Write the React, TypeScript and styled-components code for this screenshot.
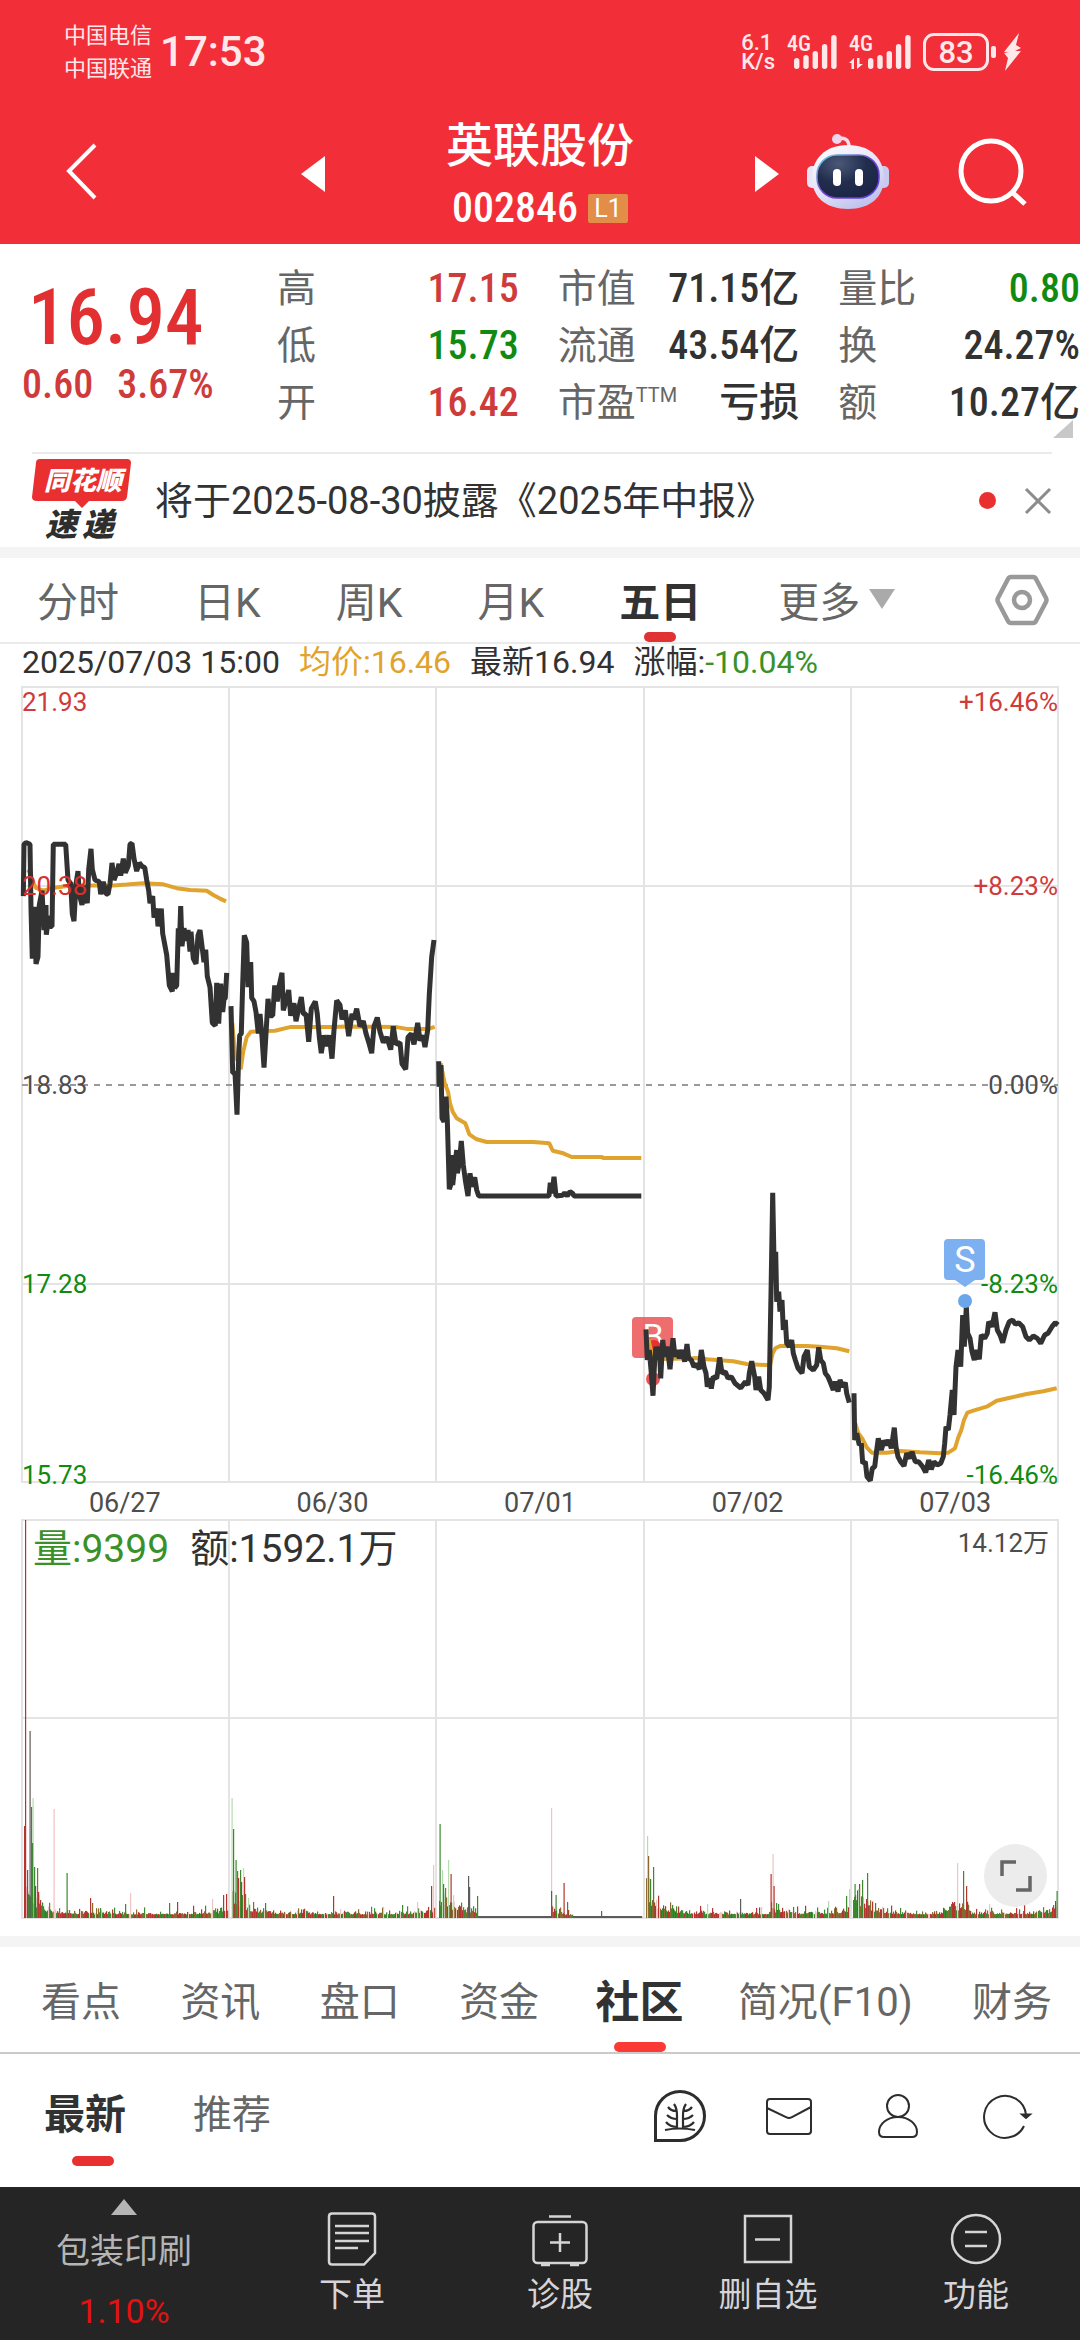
import React from "react";
import styled, { createGlobalStyle, css } from "styled-components";

const sans = `Roboto, "Noto Sans CJK SC", sans-serif`;
const figures = `"Roboto Condensed", Roboto, "Noto Sans CJK SC", sans-serif`;

const color = {
  brand: "#f22f38",
  up: "#e23032",
  upSoft: "#cf3b3b",
  down: "#118a11",
  downSoft: "#3a9128",
  ink: "#323232",
  grey: "#666666",
  axis: "#4d4d4d",
  line: "#ebebeb",
  band: "#f4f4f4",
  average: "#e0a32e",
  dock: "#252525",
  dockText: "#d6d4d6",
};

const GlobalStyle = createGlobalStyle`
  *, *::before, *::after { box-sizing: border-box; }
  body {
    margin: 0;
    background: #ffffff;
    color: ${color.ink};
    font-family: ${sans};
  }
  button {
    margin: 0;
    padding: 0;
    border: 0;
    background: none;
    color: inherit;
    font: inherit;
    cursor: pointer;
  }
  svg { display: block; overflow: visible; }
`;

const Page = styled.div`
  display: flex;
  flex-direction: column;
  min-height: 100vh;
`;

/* ---------- header ---------- */

const Header = styled.header`
  background: ${color.brand};
  color: #ffffff;
`;

const StatusBar = styled.div`
  display: flex;
  align-items: center;
  height: 104px;
  padding: 0 59px 0 64px;
  color: #ffe8ea;
`;

const Carriers = styled.div`
  font-size: 22px;
  line-height: 33px;
`;

const Clock = styled.time`
  margin-left: 8px;
  font-size: 42px;
  line-height: 48px;
  font-weight: 500;
`;

const StatusIcons = styled.div`
  display: flex;
  align-items: center;
  gap: 12px;
  margin-left: auto;
`;

const NetSpeed = styled.div`
  font-size: 22px;
  line-height: 19px;
  font-weight: 500;
`;

const Battery = styled.div`
  display: flex;
  align-items: center;
  gap: 2px;

  span {
    width: 66px;
    height: 38px;
    border: 3px solid currentColor;
    border-radius: 11px;
    font-size: 31px;
    line-height: 33px;
    font-weight: 500;
    text-align: center;
  }

  i {
    width: 5px;
    height: 12px;
    border-radius: 2px;
    background: currentColor;
  }

  svg { margin-left: 5px; }
`;

const NavBar = styled.nav`
  display: grid;
  grid-template-columns: 1fr 478px 1fr;
  align-items: center;
  height: 140px;
`;

const NavStart = styled.div`
  padding-left: 64px;
`;

const NavEnd = styled.div`
  display: flex;
  align-items: center;
  justify-content: flex-end;
  gap: 69px;
  padding-right: 54px;
`;

const StockSwitcher = styled.div`
  display: flex;
  align-items: center;
  justify-content: space-between;
`;

const StockTitle = styled.div`
  text-align: center;
  padding-top: 6px;

  h1 {
    margin: 0;
    font-size: 47px;
    line-height: 62px;
    font-weight: 500;
  }

  p {
    display: flex;
    align-items: center;
    justify-content: center;
    gap: 10px;
    margin: 0;
    font-family: ${figures};
    font-size: 42px;
    line-height: 62px;
    font-weight: 500;
  }
`;

const LevelBadge = styled.span`
  width: 40px;
  height: 29px;
  border-radius: 2px;
  background: #e28d48;
  font-family: ${sans};
  font-size: 25px;
  line-height: 30px;
  font-weight: 400;
`;

/* ---------- quote ---------- */

const Quote = styled.section`
  position: relative;
  display: grid;
  grid-template-columns: 240px 1fr;
  column-gap: 37px;
  padding-top: 16px;
  height: 208px;
`;

const Price = styled.div`
  padding: 14px 0 0 22px;
  font-family: ${figures};
  color: ${color.up};
  white-space: nowrap;

  strong {
    display: block;
    padding-left: 6px;
    font-size: 77px;
    line-height: 88px;
    font-weight: 500;
  }

  p {
    display: flex;
    gap: 24px;
    margin: 0;
    color: ${color.upSoft};
    font-size: 40px;
    line-height: 46px;
    font-weight: 500;
  }
`;

const Stats = styled.dl`
  display: grid;
  grid-template-columns: repeat(3, 1fr);
  grid-auto-rows: 57px;
  column-gap: 39px;
  margin: 0;
`;

const Stat = styled.div`
  display: flex;
  justify-content: space-between;
  align-items: baseline;
  line-height: 57px;
  white-space: nowrap;

  dt {
    color: ${color.grey};
    font-size: 39px;
  }

  dt sup {
    font-size: 20px;
    line-height: 20px;
    vertical-align: 14px;
  }
`;

const tones = { up: color.upSoft, down: color.down, plain: color.ink };

const StatValue = styled.dd<{ $tone: keyof typeof tones }>`
  margin: 0;
  color: ${(p) => tones[p.$tone]};
  font-family: ${figures};
  font-size: 40px;
  font-weight: 500;

  span {
    font-family: ${sans};
  }
`;

const MoreCorner = styled.button`
  position: absolute;
  right: 7px;
  bottom: 14px;
  width: 20px;
  height: 18px;
  background: #c8c8c8;
  clip-path: polygon(100% 0, 100% 100%, 0 100%);
`;

const Notice = styled.section`
  display: flex;
  align-items: center;
  height: 95px;
  margin: 0 28px 0 32px;
  border-top: 2px solid ${color.line};

  svg { flex: none; }

  p {
    flex: 1;
    margin: 0 0 0 23px;
    font-size: 38px;
    line-height: 48px;
    white-space: nowrap;
  }
`;

const UnreadDot = styled.i`
  width: 17px;
  height: 17px;
  margin-right: 28px;
  border-radius: 50%;
  background: #e83030;
`;

const Band = styled.div`
  flex: none;
  height: 11px;
  background: ${color.band};
`;

/* ---------- period tabs ---------- */

const PeriodTabs = styled.div`
  display: flex;
  align-items: stretch;
  height: 86px;
  padding: 0 31px 0 37px;
  border-bottom: 2px solid ${color.line};
`;

const TabButton = styled.button<{ $active?: boolean; $bar: number; $barColor: string }>`
  position: relative;
  padding-bottom: 2px;
  white-space: nowrap;
  color: ${(p) => (p.$active ? color.ink : color.grey)};
  font-weight: ${(p) => (p.$active ? 700 : 400)};

  ${(p) =>
    p.$active &&
    css`
      &::after {
        content: "";
        position: absolute;
        bottom: 0;
        left: 50%;
        width: ${p.$bar}px;
        height: 10px;
        border-radius: 5px;
        background: ${p.$barColor};
        transform: translateX(-50%);
      }
    `}
`;

const PeriodTab = styled(TabButton)`
  font-size: 41px;
  margin-right: 75px;
`;

const MorePeriods = styled(PeriodTab)`
  display: flex;
  align-items: center;
  gap: 9px;
  margin: 0 auto 0 2px;
`;

/* ---------- charts ---------- */

const Readout = styled.div`
  display: flex;
  gap: 19px;
  padding: 0 22px;
  height: 42px;
  font-size: 32px;
  line-height: 36px;
  white-space: nowrap;
`;

const Tint = styled.span<{ $c: string }>`
  color: ${(p) => p.$c};
`;

const Charts = styled.section`
  margin: 0 21px;
  padding-bottom: 17px;

  svg {
    width: 100%;
    height: auto;
    font-family: ${sans};
  }
`;

const Dates = styled.div`
  display: grid;
  grid-template-columns: repeat(5, 1fr);
  padding-top: 4px;
  color: ${color.axis};
  font-size: 27px;
  line-height: 32px;
  text-align: center;
`;

const VolumePanel = styled.div`
  position: relative;
`;

const VolumeLegend = styled.div`
  position: absolute;
  top: 6px;
  left: 12px;
  right: 10px;
  display: flex;
  gap: 21px;
  font-size: 39px;
  line-height: 48px;

  small {
    margin-left: auto;
    color: ${color.axis};
    font-size: 26px;
    line-height: 36px;
  }
`;

const ExpandButton = styled.button`
  position: absolute;
  right: 12px;
  bottom: 12px;
  display: grid;
  place-items: center;
  width: 63px;
  height: 63px;
  border-radius: 50%;
  background: #ececec;

  svg { width: 32px; height: 32px; }
`;

/* ---------- community ---------- */

const SectionTabs = styled.div`
  display: flex;
  justify-content: space-between;
  height: 107px;
  padding: 0 28px 0 41px;
  border-bottom: 2px solid #c8cacc;
`;

const SectionTab = styled(TabButton)`
  margin: ${(p) => (p.$active ? "0 -5px 0 -3px" : "0")};
  font-size: ${(p) => (p.$active ? 44 : 40)}px;
`;

const Feed = styled.div`
  display: flex;
  height: 133px;
  padding: 0 19px 0 44px;
`;

const FeedTab = styled(TabButton)`
  height: 112px;
  margin-right: 51px;
  padding: 2px 16px 0 0;
  font-size: ${(p) => (p.$active ? 41 : 39)}px;
`;

const FeedTools = styled.div`
  display: flex;
  align-items: center;
  margin-left: auto;
  padding-bottom: 9px;

  button {
    display: grid;
    justify-items: center;
    width: 109px;
  }
`;

/* ---------- dock ---------- */

const Dock = styled.footer`
  display: grid;
  grid-template-columns: 248fr repeat(4, 208fr);
  flex: 1;
  min-height: 153px;
  background: ${color.dock};
  color: ${color.dockText};
  font-size: 33px;
`;

const DockButton = styled.button`
  display: flex;
  flex-direction: column;
  align-items: center;
  padding-top: 23px;
  line-height: 50px;
`;

const Industry = styled.button`
  display: flex;
  flex-direction: column;
  align-items: center;
  padding-top: 12px;
  color: #b5b5b5;
  font-size: 34px;
  line-height: 60px;

  svg { margin-bottom: 6px; }

  span + span {
    color: #e01212;
  }
`;

/* ---------- data ---------- */

type Point = [number, number];
type Session = { x: number; y: number; kx: number; ky: number; price: string; average: string };

const sessions: Session[] = [
  {
    x: -22, y: -7, kx: 3, ky: 2.8,
    price:
      "70,605 72,460 78,455 90,460 93,640 97,780 103,635 108,795 114,775 118,630 126,590 132,700 138,630 139,713 146,660 150,690 156,690 160,460 197,460 204,560 212,570 217,655 222,675 228,570 234,535 238,600 246,630 252,575 262,625 266,530 273,473 277,530 285,560 298,565 302,600 310,565 318,598 324,600 330,570 336,512 342,560 350,540 357,515 362,548 370,500 376,540 385,520 390,460 396,457 402,500 410,535 418,512 426,522 434,525 440,560 446,590 450,625 458,605 462,665 470,640 474,690 484,640 488,710 494,740 500,770 508,855 517,872 518,820 524,862 530,855 535,695 538,745 542,633 546,745 552,695 560,730 564,700 570,760 573,705 580,780 588,795 594,715 600,700 606,745 612,790 617,755 622,830 630,860 637,960 646,968 650,848 656,962 662,850 668,930 672,895 676,890 680,820",
    average:
      "84,540 90,530 97,562 108,582 130,590 160,582 200,577 260,575 340,575 380,573 430,569 490,572 530,583 570,588 620,590 640,602 660,612 678,620",
  },
  {
    x: -22, y: -7, kx: 3, ky: 2.8,
    price:
      "693,913 698,1100 705,1100 711,1217 716,1050 719,995 724,990 728,850 733,715 740,735 744,860 752,790 755,890 762,900 768,930 775,990 780,935 786,1000 792,1085 798,990 804,893 810,940 818,940 824,855 832,900 838,855 846,820 850,925 858,900 866,868 872,940 882,905 888,955 896,920 904,888 910,935 918,935 926,1013 934,920 946,900 952,935 958,1000 964,1045 972,995 980,1025 988,995 996,1060 1002,980 1010,897 1020,910 1026,950 1036,925 1046,997 1056,935 1062,950 1070,920 1080,970 1090,955 1098,990 1108,1020 1115,1045 1122,970 1132,945 1140,985 1150,1015 1160,1000 1172,1035 1180,970 1188,1020 1200,1015 1206,1075 1217,1090 1224,1000 1234,990 1242,1020 1253,960 1260,1010 1268,995 1275,1028 1283,980 1288,880 1295,775 1302,728",
    average:
      "697,960 705,1050 715,1070 722,1090 730,1040 740,1000 752,985 790,983 825,982 870,972 1000,972 1040,970 1190,972 1220,977 1285,977 1304,971",
  },
  {
    x: 398, y: 213, kx: 3, ky: 3,
    price:
      "56,484 57,560 63,495 66,655 72,665 78,590 82,660 88,868 94,850 96,765 98,855 104,800 110,750 112,820 118,790 124,723 130,795 136,840 144,888 150,820 156,860 164,832 170,870 176,888 387,888 391,848 396,880 402,830 408,888 428,886 434,878 442,888 450,875 458,880 462,888 664,888",
    average:
      "62,490 68,520 74,550 84,575 90,610 98,635 110,655 136,670 148,703 170,718 200,726 340,726 388,730 398,752 430,760 455,771 545,771 550,774 664,774",
  },
  {
    x: 598, y: 473, kx: 3, ky: 3,
    price:
      "78,508 82,600 88,570 94,640 99,707 104,600 108,560 112,600 118,560 122,655 128,540 134,590 142,560 150,628 159,535 165,590 172,570 178,595 186,570 194,605 201,552 206,595 214,600 222,620 230,612 238,628 244,570 252,620 258,640 262,680 270,655 274,686 280,650 290,655 299,592 306,640 316,635 324,655 334,650 345,670 362,684 376,665 384,675 388,640 395,604 404,650 408,690 416,650 422,690 432,700 444,720 448,680 453,400 458,98 462,300 467,275 470,425 476,395 480,455 486,420 490,510 496,480 500,550 508,560 515,540 520,580 526,600 534,625 546,640 552,590 562,570 568,620 580,630 590,615 596,562 602,600 610,610 616,640 624,650 632,670 640,690 646,665 654,695 660,660 668,680 676,668 680,700 688,728",
    average:
      "86,540 92,570 102,590 120,597 160,596 240,594 262,598 340,604 380,612 450,616 458,580 466,565 480,558 560,558 600,560 650,565 688,574",
  },
  {
    x: 598, y: 473, kx: 3, ky: 3,
    price:
      "702,700 704,840 710,820 718,855 724,850 728,910 736,905 741,950 751,962 757,925 764,920 770,870 775,835 784,870 792,842 800,855 806,840 814,865 823,803 828,860 834,890 842,905 852,918 860,880 870,895 876,875 886,905 896,905 908,920 917,937 926,900 934,928 942,905 952,915 962,910 970,890 974,850 978,800 985,810 990,765 997,690 1002,765 1008,620 1014,570 1022,620 1028,465 1033,560 1039,440 1043,520 1050,535 1056,575 1063,600 1070,570 1078,598 1084,525 1094,535 1102,520 1106,485 1116,500 1125,457 1132,510 1140,525 1148,548 1158,510 1168,485 1178,480 1186,493 1196,488 1208,500 1218,530 1228,540 1240,528 1252,535 1262,550 1274,525 1284,520 1296,500 1306,488 1314,495",
    average:
      "706,790 715,820 728,838 740,862 755,878 800,878 840,873 900,877 960,880 985,878 1005,865 1014,835 1024,810 1032,780 1042,758 1060,752 1100,740 1130,722 1170,713 1220,702 1270,694 1310,685",
  },
];

const plot = (s: Session, source: string) =>
  source
    .split(" ")
    .map((pair) => pair.split(",").map(Number) as Point)
    .map(([px, py]) => `${(s.x + px / s.kx).toFixed(1)},${(s.y + py / s.ky).toFixed(1)}`)
    .join(" ");

const barColors = {
  r: "#b5342f", R: "#f0c4c2", g: "#3c8a30", G: "#b4dcb0", k: "#5c5c5c", n: "#8a6a2e",
};
type Bar = { x: number; h: number; c: keyof typeof barColors };

/* tallest one-minute bars: x, height, colour */
const peaks: Bar[] = (
  "2,92,r 3,398,r 5,48,k 7.5,187,k 9,111,g 10.5,120,G 10,75,g 12,51,g 13,32,r 15,50,n 16,26,r 18,18,r 31.5,109,R 44.5,45,g 68,20,r 70,15,n 78,10,g 103,14,g 108,25,R 147,15,g 155,16,r 190,19,R 201,23,r 204,24,r " +
  "209.5,120,G 211,89,g 213.5,58,g 215,47,n 216,40,r 218,48,g 219,36,r 221,50,R 222,41,r 223,24,g 226,20,G 243,15,g 311,22,r 380,13,g 395,16,R 409,32,r 411,53,R " +
  "417.5,94,g 420,48,G 421,34,g 423,30,n 426,58,G 428.5,44,r 431,23,R 446,42,k 447,31,k 455,22,g " +
  "529,110,R 529,27,k 533.5,23,g 541.5,35,r 545,16,g 579,7,k " +
  "625,82,G 626,62,n 628,39,g 631,51,g 685,14,G 718,19,k 748.5,44,r 750.5,64,R 751.5,32,r 754,15,g 806,17,G 824,22,g 827,29,G " +
  "832.5,34,g 836,29,G 840,38,g 845,45,g 930,16,r 935,55,R 941,47,g 944,32,r 967,14,R 1002,14,r 1033,17,r 1034.5,27,g"
)
  .split(" ")
  .map((item) => {
    const [x, h, c] = item.split(",");
    return { x: Number(x), h: Number(h), c: c as Bar["c"] };
  });

const envelope = (x: number) => {
  const session = Math.min(4, Math.floor(x / 207.2));
  const t = x - session * 207.2;
  if (session === 2) {
    if (t < 40) return 34 * Math.exp(-t / 20) + 6;
    if (t > 114 && t < 136) return 16 * Math.exp(-(t - 114) / 10) + 1;
    return 1;
  }
  const opening = 58 * Math.exp(-t / 14);
  const closing = 12 * Math.exp(-(207 - t) / 12);
  const surge = session === 4 && t > 92 && t < 120 ? 14 : 0;
  const spike = session === 3 && t > 126 && t < 150 ? 8 : 0;
  return opening + closing + surge + spike + 6;
};

const minuteBars: Bar[] = (() => {
  const out: Bar[] = [];
  let seed = 20250703;
  const next = () => {
    seed = (seed * 1103515245 + 12345) % 2147483648;
    return seed / 2147483648;
  };
  for (let x = 2; x < 1036; x += 1) {
    const top = envelope(x);
    const gap = x % 207.2 > 205 || x % 207.2 < 2;
    const roll = next();
    const h = top === 1 ? 2 : 2 + top * (0.25 + 0.75 * next() * next()) + (next() > 0.93 ? 5 : 0);
    const c = top === 1 ? "k" : roll < 0.34 ? "r" : roll < 0.68 ? "g" : roll < 0.92 ? "n" : "R";
    if (!gap) out.push({ x, h, c: c as Bar["c"] });
  }
  return out;
})();

const columns = [207, 414, 622, 829];
const dates = ["06/27", "06/30", "07/01", "07/02", "07/03"];
const leftAxis = [
  { y: 15, text: "21.93", fill: color.upSoft },
  { y: 199, text: "20.38", fill: "#d8302c" },
  { y: 398, text: "18.83", fill: color.axis },
  { y: 597, text: "17.28", fill: color.down },
  { y: 788, text: "15.73", fill: color.down },
];
const rightAxis = [
  { y: 15, text: "+16.46%", fill: color.upSoft },
  { y: 199, text: "+8.23%", fill: color.upSoft },
  { y: 398, text: "0.00%", fill: color.axis },
  { y: 597, text: "-8.23%", fill: color.down },
  { y: 788, text: "-16.46%", fill: color.down },
];

type Row = { label: React.ReactNode; value: React.ReactNode; tone: keyof typeof tones };
const stats: Row[] = [
  { label: "高", value: "17.15", tone: "up" },
  { label: "市值", value: <>71.15<span>亿</span></>, tone: "plain" },
  { label: "量比", value: "0.80", tone: "down" },
  { label: "低", value: "15.73", tone: "down" },
  { label: "流通", value: <>43.54<span>亿</span></>, tone: "plain" },
  { label: "换", value: "24.27%", tone: "plain" },
  { label: "开", value: "16.42", tone: "up" },
  { label: <>市盈<sup>TTM</sup></>, value: <span>亏损</span>, tone: "plain" },
  { label: "额", value: <>10.27<span>亿</span></>, tone: "plain" },
];

/* ---------- drawings ---------- */

const Signal = ({ data }: { data?: boolean }) => {
  const shift = data ? 12 : 0;
  const heights = [11, 14, 18, 25, 34];
  return (
    <svg width={50 + shift} height="36" viewBox={`0 0 ${50 + shift} 36`} fill="currentColor" aria-hidden="true">
      <text x="0" y="17" fontSize="22" fontFamily={figures} fontWeight="500">4G</text>
      {heights.map((h, i) => (
        <rect key={h} x={7 + shift + i * 9.3} y={35 - h} width="5.4" height={h} rx="2.7" />
      ))}
      {data && <path d="M0 29l5-5v11H2.500v-6zM8 24h2.500v6H14l-6 5z" />}
    </svg>
  );
};

const Robot = () => (
  <svg width="82" height="76" viewBox="0 0 82 76" aria-hidden="true">
    <defs>
      <linearGradient id="shell" x1="0" y1="0" x2="0.6" y2="1">
        <stop offset="0" stopColor="#ffffff" />
        <stop offset="0.6" stopColor="#e4e2f6" />
        <stop offset="1" stopColor="#bfc3ee" />
      </linearGradient>
      <linearGradient id="rim" x1="0" y1="0" x2="1" y2="1">
        <stop offset="0" stopColor="#63d6e8" />
        <stop offset="0.5" stopColor="#7a3fd0" />
        <stop offset="1" stopColor="#5a3fe0" />
      </linearGradient>
      <radialGradient id="visor" cx="0.35" cy="0.2" r="0.9">
        <stop offset="0" stopColor="#4a5876" />
        <stop offset="0.5" stopColor="#222d4e" />
        <stop offset="1" stopColor="#1b2344" />
      </radialGradient>
    </defs>
    <path d="M30 3c7-2 12 0 12 8" fill="none" stroke="#f3dcec" strokeWidth="3.500" />
    <circle cx="30" cy="3" r="5" fill="#f0d4ea" />
    <rect x="0" y="30" width="12" height="22" rx="5" fill="#e6e6f8" />
    <rect x="70" y="30" width="12" height="22" rx="5" fill="#c9caf0" />
    <path d="M41 9C64 9 77 23 77 42S63 73 41 73 5 61 5 42 18 9 41 9z" fill="url(#shell)" />
    <rect x="10" y="19" width="62" height="43" rx="20" fill="url(#visor)" stroke="url(#rim)" strokeWidth="1.500" />
    <rect x="26" y="33" width="8" height="17" rx="4" fill="#ffffff" />
    <rect x="48" y="33" width="8" height="17" rx="4" fill="#ffffff" />
  </svg>
);

const ExpressLogo = () => (
  <svg width="100" height="84" viewBox="0 3 100 84" role="img" aria-label="同花顺速递">
    <path d="M8 3h87q4 0 4 4l-4 34q-1 4-5 4H57l-7 7-7-7H5q-5 0-5-4L4 7q0-4 4-4z" fill="#e92f30" />
    <g fontFamily={sans} fontWeight="900" fontStyle="italic" textAnchor="middle">
      <text x="51" y="34" fontSize="26" fill="#ffffff">同花顺</text>
      <text x="29" y="80" fontSize="32" fill="#2e2e2e">速</text>
      <text x="66" y="80" fontSize="32" fill="#2e2e2e">递</text>
    </g>
  </svg>
);

const PriceChart = () => (
  <svg viewBox="-1 -1 1038 797" role="img" aria-label="五日价格走势" fontSize="26">
    <g fill="none" stroke="#e4e4e4" strokeWidth="2">
      <rect x="0" y="0" width="1036" height="795" />
      <path d="M0 199H1036M0 597H1036" />
      {columns.map((x) => <path key={x} d={`M${x} 0V795`} />)}
    </g>
    <path d="M0 398H1036" stroke="#999999" strokeWidth="2" strokeDasharray="6 6" />
    <g fill="#eb5455">
      <rect x="610" y="630" width="41" height="41" rx="4" opacity="0.85" />
      <circle cx="631" cy="692" r="7" />
    </g>
    <text x="631" y="661" fontSize="34" fill="#ffffff" textAnchor="middle">B</text>
    <circle cx="632" cy="660" r="7" fill="#e8302f" />
    {sessions.map((s, i) => (
      <g key={i} fill="none" strokeLinejoin="bevel">
        <polyline points={plot(s, s.average)} stroke={color.average} strokeWidth="4" />
        <polyline points={plot(s, s.price)} stroke={color.ink} strokeWidth="5" />
      </g>
    ))}
    <path d="M926 552h33q4 0 4 4v33q0 4-4 4h-6l-10 7-10-7h-7q-4 0-4-4v-33q0-4 4-4z" fill="#7cb0f0" />
    <text x="943" y="585" fontSize="36" fill="#ffffff" textAnchor="middle">S</text>
    <circle cx="943" cy="614" r="7" fill="#6ba5ea" />
    {leftAxis.map((a) => (
      <text key={a.text} x="0" y={a.y + 9} fill={a.fill}>{a.text}</text>
    ))}
    {rightAxis.map((a) => (
      <text key={a.text} x="1036" y={a.y + 9} fill={a.fill} textAnchor="end">{a.text}</text>
    ))}
  </svg>
);

const VolumeChart = () => (
  <svg viewBox="-1 -1 1038 400" role="img" aria-label="成交量">
    <g fill="none" stroke="#e4e4e4" strokeWidth="2">
      <rect x="0" y="0" width="1036" height="398" />
      <path d="M0 198H1036" />
      {columns.map((x) => <path key={x} d={`M${x} 0V398`} />)}
    </g>
    {[...minuteBars, ...peaks].map((b, i) => (
      <rect key={i} x={b.x} y={398 - b.h} width="1.2" height={b.h} fill={barColors[b.c]} />
    ))}
  </svg>
);

const LeafIcon = () => (
  <svg width="54" height="54" viewBox="0 0 54 54" fill="none" stroke="#2d2d2d" aria-hidden="true">
    <path d="M2.500 51.500V27a24.500 24.500 0 1 1 24.500 24.500z" strokeWidth="3" />
    <path d="M12 41q14-3 30 0M24 40V27q0-8-3-12M30 40V27q0-8 3-12M23 22q-5 0-8-4M24 30q-6 0-10-4M24 38q-7 0-11-5M31 22q5 0 8-4M30 30q6 0 10-4M30 38q7 0 11-5" strokeWidth="2.200" />
  </svg>
);

const MailIcon = () => (
  <svg width="48" height="54" viewBox="0 0 48 54" fill="none" stroke="#2d2d2d" strokeWidth="2" aria-hidden="true">
    <rect x="2" y="10" width="44" height="35" rx="3" />
    <path d="M2 19l19 9q3 2 6 0l19-10" />
  </svg>
);

const UserIcon = () => (
  <svg width="42" height="54" viewBox="0 0 42 54" fill="none" stroke="#2d2d2d" strokeWidth="2" aria-hidden="true">
    <circle cx="21" cy="17" r="11" />
    <path d="M21 28c11 0 19 7 19 15q0 5-5 5H7q-5 0-5-5c0-8 8-15 19-15z" />
  </svg>
);

const RefreshIcon = () => (
  <svg width="50" height="54" viewBox="0 0 50 54" fill="none" stroke="#2d2d2d" strokeWidth="2" aria-hidden="true">
    <path d="M42 37A21 21 0 1 1 44 26" />
    <path d="M40 25.500h8l-4 3.500z" fill="#2d2d2d" />
  </svg>
);

const dockIcon = {
  width: 58, height: 60, viewBox: "0 0 58 60", fill: "none", stroke: color.dockText, strokeWidth: 2.5, "aria-hidden": true,
} as const;

const dock = [
  {
    name: "下单",
    icon: (
      <svg {...dockIcon}>
        <path d="M9 3.500h40q3 0 3 3V43L41 54.500H9q-3 0-3-3V6.500q0-3 3-3zM12 16h34M12 23h34M12 31h34M12 38h23" />
      </svg>
    ),
  },
  {
    name: "诊股",
    icon: (
      <svg {...dockIcon}>
        <rect x="2.500" y="12" width="53" height="41" rx="4" />
        <path d="M18 6.500h22M10 55h9M39 55h9M29 23v19M19 32.500h20" />
      </svg>
    ),
  },
  {
    name: "删自选",
    icon: (
      <svg {...dockIcon}>
        <path d="M6 6h46v46H6zM16 29.500h25" />
      </svg>
    ),
  },
  {
    name: "功能",
    icon: (
      <svg {...dockIcon}>
        <circle cx="29" cy="29" r="24" />
        <path d="M18 22h22M18 36h22" />
      </svg>
    ),
  },
];

const periods = ["分时", "日K", "周K", "月K", "五日"];
const sections = ["看点", "资讯", "盘口", "资金", "社区", "简况(F10)", "财务"];

export default function App() {
  return (
    <Page>
      <GlobalStyle />
      <Header>
        <StatusBar>
          <Carriers>
            <div>中国电信</div>
            <div>中国联通</div>
          </Carriers>
          <Clock>17:53</Clock>
          <StatusIcons>
            <NetSpeed>
              <div>6.1</div>
              <div>K/s</div>
            </NetSpeed>
            <Signal />
            <Signal data />
            <Battery>
              <span>83</span>
              <i />
              <svg width="18" height="38" viewBox="0 0 18 38" fill="currentColor" aria-hidden="true">
                <path d="M16 0L1 19h5l-5 1 4 5-3 13 16-20h-6l6-3-5-3z" />
              </svg>
            </Battery>
          </StatusIcons>
        </StatusBar>
        <NavBar>
          <NavStart>
            <button aria-label="返回">
              <svg width="34" height="58" viewBox="0 0 34 58" fill="none" stroke="#ffffff" strokeWidth="4" aria-hidden="true">
                <path d="M31 2L5 28l26 27" />
              </svg>
            </button>
          </NavStart>
          <StockSwitcher>
            <button aria-label="上一只">
              <svg width="24" height="36" fill="#ffffff" aria-hidden="true"><path d="M24 0v36L0 18z" /></svg>
            </button>
            <StockTitle>
              <h1>英联股份</h1>
              <p>
                002846 <LevelBadge>L1</LevelBadge>
              </p>
            </StockTitle>
            <button aria-label="下一只">
              <svg width="24" height="36" fill="#ffffff" aria-hidden="true"><path d="M0 0v36l24-18z" /></svg>
            </button>
          </StockSwitcher>
          <NavEnd>
            <button aria-label="智能助手"><Robot /></button>
            <button aria-label="搜索">
              <svg width="68" height="68" viewBox="0 0 68 68" fill="none" stroke="#ffffff" strokeWidth="5" aria-hidden="true">
                <circle cx="33" cy="31" r="30" />
                <path d="M54 52l13 12" />
              </svg>
            </button>
          </NavEnd>
        </NavBar>
      </Header>

      <Quote>
        <Price>
          <strong>16.94</strong>
          <p>
            <span>0.60</span>
            <span>3.67%</span>
          </p>
        </Price>
        <Stats>
          {stats.map((s, i) => (
            <Stat key={i}>
              <dt>{s.label}</dt>
              <StatValue $tone={s.tone}>{s.value}</StatValue>
            </Stat>
          ))}
        </Stats>
        <MoreCorner aria-label="展开" />
      </Quote>

      <Notice>
        <ExpressLogo />
        <p>将于2025-08-30披露《2025年中报》</p>
        <UnreadDot />
        <button aria-label="关闭">
          <svg width="28" height="28" viewBox="0 0 28 28" stroke="#8c8c8c" strokeWidth="3" aria-hidden="true">
            <path d="M2 2l24 24M26 2L2 26" />
          </svg>
        </button>
      </Notice>
      <Band />

      <PeriodTabs role="tablist">
        {periods.map((p) => (
          <PeriodTab key={p} role="tab" $active={p === "五日"} $bar={32} $barColor="#e03232">{p}</PeriodTab>
        ))}
        <MorePeriods $bar={32} $barColor="#e03232">
          更多
          <svg width="26" height="20" fill="#aaaaaa" aria-hidden="true"><path d="M0 0h26L13 20z" /></svg>
        </MorePeriods>
        <button aria-label="设置">
          <svg width="54" height="54" viewBox="0 0 54 54" fill="none" stroke="#999999" strokeWidth="4.500" strokeLinejoin="round" aria-hidden="true">
            <path d="M16 4h22q2 0 3 2l10 19q1 2 0 4L41 48q-1 2-3 2H16q-2 0-3-2L3 29q-1-2 0-4L13 6q1-2 3-2z" />
            <circle cx="27" cy="27" r="8" />
          </svg>
        </button>
      </PeriodTabs>

      <Readout>
        <span>2025/07/03 15:00</span>
        <Tint $c={color.average}>均价:16.46</Tint>
        <span>最新16.94</span>
        <span>涨幅:<Tint $c={color.downSoft}>-10.04%</Tint></span>
      </Readout>
      <Charts>
        <PriceChart />
        <Dates>
          {dates.map((d) => <span key={d}>{d}</span>)}
        </Dates>
        <VolumePanel>
          <VolumeChart />
          <VolumeLegend>
            <Tint $c={color.downSoft}>量:9399</Tint>
            <span>额:1592.1万</span>
            <small>14.12万</small>
          </VolumeLegend>
          <ExpandButton aria-label="全屏">
            <svg viewBox="0 0 32 32" fill="none" stroke="#666666" strokeWidth="3.500" aria-hidden="true">
              <path d="M2 16V2h14M30 16v14H16" />
            </svg>
          </ExpandButton>
        </VolumePanel>
      </Charts>
      <Band />

      <SectionTabs role="tablist">
        {sections.map((s) => (
          <SectionTab key={s} role="tab" $active={s === "社区"} $bar={52} $barColor="#fb3a35">{s}</SectionTab>
        ))}
      </SectionTabs>
      <Feed>
        <FeedTab $active $bar={42} $barColor="#e73131">最新</FeedTab>
        <FeedTab $bar={42} $barColor="#e73131">推荐</FeedTab>
        <FeedTools>
          <button aria-label="社区"><LeafIcon /></button>
          <button aria-label="消息"><MailIcon /></button>
          <button aria-label="我的"><UserIcon /></button>
          <button aria-label="刷新"><RefreshIcon /></button>
        </FeedTools>
      </Feed>

      <Dock>
        <Industry>
          <svg width="26" height="16" fill="#b5b5b5" aria-hidden="true"><path d="M13 0l13 16H0z" /></svg>
          <span>包装印刷</span>
          <span>1.10%</span>
        </Industry>
        {dock.map((d) => (
          <DockButton key={d.name}>
            {d.icon}
            {d.name}
          </DockButton>
        ))}
      </Dock>
    </Page>
  );
}
